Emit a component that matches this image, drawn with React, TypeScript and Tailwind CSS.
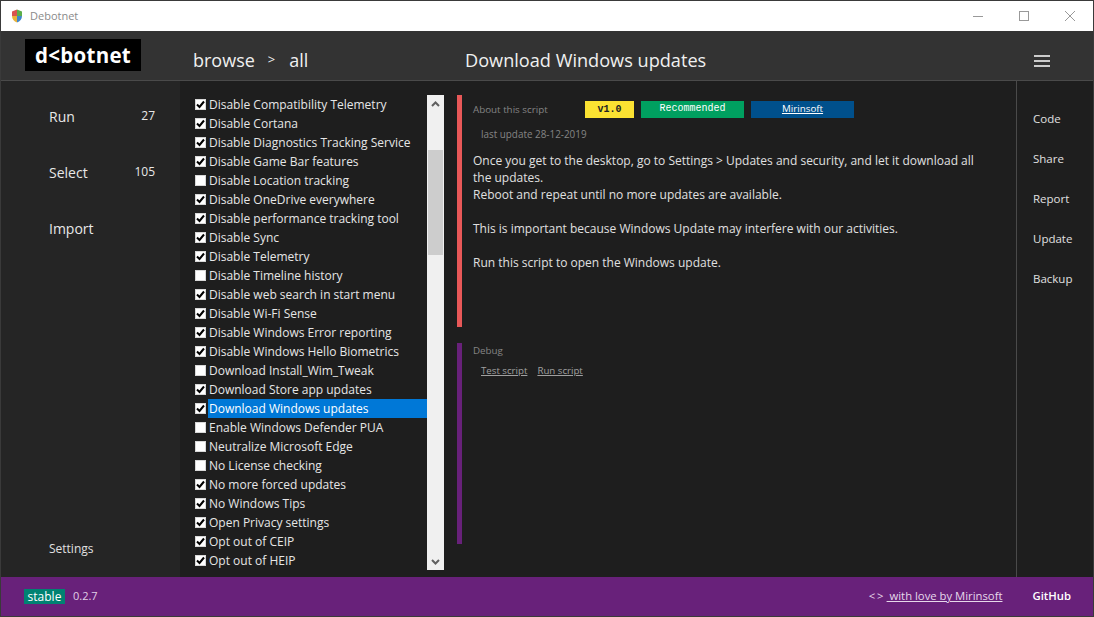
import React from 'react';

const scripts: [string, boolean][] = [
  ['Disable Compatibility Telemetry', true],
  ['Disable Cortana', true],
  ['Disable Diagnostics Tracking Service', true],
  ['Disable Game Bar features', true],
  ['Disable Location tracking', false],
  ['Disable OneDrive everywhere', true],
  ['Disable performance tracking tool', true],
  ['Disable Sync', true],
  ['Disable Telemetry', true],
  ['Disable Timeline history', false],
  ['Disable web search in start menu', true],
  ['Disable Wi-Fi Sense', true],
  ['Disable Windows Error reporting', true],
  ['Disable Windows Hello Biometrics', true],
  ['Download Install_Wim_Tweak', false],
  ['Download Store app updates', true],
  ['Download Windows updates', true],
  ['Enable Windows Defender PUA', false],
  ['Neutralize Microsoft Edge', false],
  ['No License checking', false],
  ['No more forced updates', true],
  ['No Windows Tips', true],
  ['Open Privacy settings', true],
  ['Opt out of CEIP', true],
  ['Opt out of HEIP', true],
];

const rightNav = ['Code', 'Share', 'Report', 'Update', 'Backup'];

const TitleBar = () => (
  <div className="flex h-[30px] shrink-0 items-center bg-white">
    <svg className="ml-[10px] h-[14px] w-[12px]" viewBox="0 0 12 14">
      <path d="M6 0.5 L1 2.5 V7 H6 Z" fill="#d9534f" />
      <path d="M6 0.5 L11 2.5 V7 H6 Z" fill="#5cae4a" />
      <path d="M1 7 C1 10 3 12.5 6 13.5 V7 Z" fill="#e8b23a" />
      <path d="M11 7 C11 10 9 12.5 6 13.5 V7 Z" fill="#3f86c9" />
    </svg>
    <span className="ml-[7px] text-[11px] text-[#8a8a8a]">Debotnet</span>
    <div className="ml-auto flex items-center">
      <div className="flex h-[30px] w-[46px] items-center justify-center">
        <div className="h-px w-[10px] bg-[#999999]" />
      </div>
      <div className="flex h-[30px] w-[46px] items-center justify-center">
        <div className="h-[10px] w-[10px] border border-[#999999]" />
      </div>
      <div className="flex h-[30px] w-[46px] items-center justify-center">
        <svg className="h-[10px] w-[10px]" viewBox="0 0 10 10">
          <path d="M0 0 L10 10 M10 0 L0 10" stroke="#999999" strokeWidth="1" />
        </svg>
      </div>
    </div>
  </div>
);

const Header = () => (
  <div className="flex h-[50px] shrink-0 border-b border-[#4a4a4a] bg-[#333333]">
    <div className="ml-[24px] mt-[8px] flex h-[32px] w-[116px] items-center justify-center bg-black text-[20.5px] font-bold tracking-[0.3px] text-white">
      d&lt;botnet
    </div>
    <div className="ml-[52px] mt-[15px] flex h-[28px] w-[272px] items-center text-[18px] text-[#f0f0f0]">
      <span>browse</span>
      <span className="ml-[13px] text-[13px]">&gt;</span>
      <span className="ml-[14px]">all</span>
    </div>
    <div className="mt-[16px] flex h-[28px] items-center text-[18.15px] text-[#f0f0f0]">Download Windows updates</div>
    <div className="ml-auto mr-[43px] mt-[24px] flex h-[12px] w-[16px] flex-col justify-between">
      <div className="h-[2px] bg-[#cccccc]" />
      <div className="h-[2px] bg-[#cccccc]" />
      <div className="h-[2px] bg-[#cccccc]" />
    </div>
  </div>
);

const SideItem = ({ label, count }: { label: string; count?: string }) => (
  <div className="flex h-[56px] items-start justify-between pl-[48px] pr-[25px] text-[14px] text-[#e8e8e8]">
    <span>{label}</span>
    {count && <span className="mt-px text-[12px]">{count}</span>}
  </div>
);

const Sidebar = () => (
  <div className="flex w-[179px] shrink-0 flex-col bg-[#252525] pt-[25px]">
    <SideItem label="Run" count="27" />
    <SideItem label="Select" count="105" />
    <SideItem label="Import" />
    <div className="mb-[19px] ml-[48px] mt-auto text-[12px] text-[#e0e0e0]">Settings</div>
  </div>
);

const CheckBox = ({ checked }: { checked: boolean }) => (
  <div className="mr-[2px] flex h-[11px] w-[11px] shrink-0 items-center justify-center border border-[#d8d8d8] bg-white">
    {checked && (
      <svg className="h-[9px] w-[9px]" viewBox="0 0 9 9">
        <path d="M1 4.5 L3.5 7 L8 1.5" fill="none" stroke="#000000" strokeWidth="2" />
      </svg>
    )}
  </div>
);

const ScriptList = () => (
  <div className="flex h-[475px] w-[264px] shrink-0 bg-[#1e1e1e]">
    <div className="w-[247px] overflow-hidden">
      {scripts.map(([name, checked]) => {
        const active = name === 'Download Windows updates';
        return (
          <div key={name} className="flex h-[19px] items-center pl-[15px]">
            <CheckBox checked={checked} />
            <span className={`flex h-[19px] flex-1 items-center whitespace-nowrap pl-px text-[12px] ${active ? 'bg-[#0078d7] text-white' : 'text-[#e6e6e6]'}`}>
              {name}
            </span>
          </div>
        );
      })}
    </div>
    <div className="flex w-[17px] flex-col bg-[#f0f0f0] px-px">
      <div className="flex h-[17px] items-center justify-center">
        <svg className="h-[6px] w-[9px]" viewBox="0 0 9 6">
          <path d="M1 5 L4.5 1.5 L8 5" fill="none" stroke="#606060" strokeWidth="2" />
        </svg>
      </div>
      <div className="mt-[38px] h-[105px] bg-[#cdcdcd]" />
      <div className="mt-auto flex h-[17px] items-center justify-center">
        <svg className="h-[6px] w-[9px]" viewBox="0 0 9 6">
          <path d="M1 1 L4.5 4.5 L8 1" fill="none" stroke="#606060" strokeWidth="2" />
        </svg>
      </div>
    </div>
  </div>
);

const ScriptInfo = () => (
  <div className="flex w-[559px] shrink-0 flex-col">
    <div className="h-[232px] border-l-[5px] border-[#e85858] pl-[11px]">
      <div className="flex items-start pt-[6px]">
        <span className="w-[112px] pt-[2px] text-[9.8px] text-[#858585]">About this script</span>
        <span className="flex h-[17px] w-[49px] items-center justify-center bg-[#fbe232] font-['Liberation_Mono',monospace] text-[10px] font-bold text-[#222222]">v1.0</span>
        <span className="ml-[7px] flex h-[17px] w-[103px] items-start justify-center bg-[#00a060] font-['Liberation_Mono',monospace] text-[10px] text-white">Recommended</span>
        <span className="ml-[7px] flex h-[17px] w-[103px] items-center justify-center bg-[#00508c] text-[9.8px] text-white underline">Mirinsoft</span>
      </div>
      <div className="mt-[9px] pl-[8px] text-[9.9px] text-[#858585]">last update 28-12-2019</div>
      <div className="mt-[10px] w-[515px] text-[12px] leading-[17px] text-[#e0e0e0]">
        <p>Once you get to the desktop, go to Settings &gt; Updates and security, and let it download all the updates.</p>
        <p>Reboot and repeat until no more updates are available.</p>
        <p className="mt-[17px]">This is important because Windows Update may interfere with our activities.</p>
        <p className="mt-[17px]">Run this script to open the Windows update.</p>
      </div>
    </div>
    <div className="mt-[16px] h-[201px] border-l-[5px] border-[#68217a] pl-[11px]">
      <div className="pt-px text-[9.8px] text-[#858585]">Debug</div>
      <div className="mt-[5px] flex gap-[10px] pl-[8px] text-[9.7px] text-[#a0a0a0] underline">
        <span>Test script</span>
        <span>Run script</span>
      </div>
    </div>
  </div>
);

const RightNav = () => (
  <div className="flex w-[77px] shrink-0 flex-col gap-[22px] border-l border-[#4a4a4a] pl-[16px] pt-[29px] text-[11.5px] leading-[18px] text-[#e0e0e0]">
    {rightNav.map((item) => (
      <span key={item}>{item}</span>
    ))}
  </div>
);

const Footer = () => (
  <div className="flex h-[39px] shrink-0 items-center bg-[#68217a] pl-[23px] pr-[22px] text-[11.3px] text-[#e6d8ea]">
    <span className="flex h-[15px] w-[41px] items-center justify-center bg-[#008272] text-[12px] text-white">stable</span>
    <span className="ml-[8px] text-[11px] text-[#e0cfe6]">0.2.7</span>
    <span className="ml-auto mr-[30px] flex items-center">
      <span className="tracking-[2px]">&lt;&gt;</span>
      <span className="pl-px underline">&nbsp;with love by Mirinsoft</span>
    </span>
    <span className="font-semibold text-white">GitHub</span>
  </div>
);

export default function App() {
  return (
    <div className="flex h-[617px] w-[1094px] flex-col overflow-hidden border border-[#3a3a3a] bg-[#1e1e1e] font-['Open_Sans','Noto_Sans',sans-serif]">
      <TitleBar />
      <Header />
      <div className="flex h-[496px] shrink-0">
        <Sidebar />
        <div className="flex flex-1 items-start pt-[14px]">
          <ScriptList />
          <div className="w-[13px] shrink-0" />
          <ScriptInfo />
        </div>
        <RightNav />
      </div>
      <Footer />
    </div>
  );
}
